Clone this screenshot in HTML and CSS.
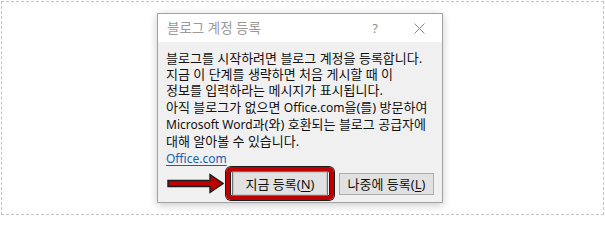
FILE: index.html
```html
<!DOCTYPE html>
<html lang="ko">
<head>
<meta charset="utf-8">
<title>블로그 계정 등록</title>
<link rel="stylesheet" href="styles.css">
</head>
<body>
<div class="frame">
  <div class="dialog">
    <div class="titlebar">
      <span class="title">블로그 계정 등록</span>
      <span class="tb-btn help">?</span>
      <span class="tb-btn close">
        <svg width="11" height="11" viewBox="0 0 11 11"><path d="M0.5 0.5 L10.5 10.5 M10.5 0.5 L0.5 10.5" stroke="#8a8a8a" stroke-width="1" fill="none"/></svg>
      </span>
    </div>
    <div class="body">
      <p class="para">블로그를 시작하려면 블로그 계정을 등록합니다.<br>지금 이 단계를 생략하면 처음 게시할 때 이<br>정보를 입력하라는 메시지가 표시됩니다.</p>
      <p class="para para2">아직 블로그가 없으면 <span class="en">Office.com</span>을(를) 방문하여<br><span class="en">Microsoft Word</span>과(와) 호환되는 블로그 공급자에<br>대해 알아볼 수 있습니다.</p>
      <a class="link en" href="#">Office.com</a>
      <div class="row">
        <svg class="arrow" width="57" height="21" viewBox="0 0 57 21">
          <polygon points="1,7.5 43,7.5 43,1.5 56,10.5 43,19.5 43,13.5 1,13.5" fill="#c00000" stroke="#1c1c1c" stroke-width="1.4" stroke-linejoin="miter"/>
        </svg>
        <div class="highlight">
          <button class="btn btn-default">지금 등록(<u>N</u>)</button>
        </div>
        <button class="btn btn-later">나중에 등록(<u>L</u>)</button>
      </div>
    </div>
  </div>
</div>
</body>
</html>
```
FILE: styles.css
```css
html, body {
  margin: 0;
  padding: 0;
  background: #ffffff;
}
.frame {
  box-sizing: border-box;
  width: 603px;
  height: 214px;
  margin: 1px 0 0 1px;
  border: 1px dashed #c4c4c4;
  overflow: hidden;
}
.dialog {
  box-sizing: border-box;
  width: 286px;
  height: 190px;
  margin: 11px 0 0 155px;
  border: 1px solid #a3a3a3;
  background: #f0f0f0;
  box-shadow: 0 2px 8px rgba(0, 0, 0, 0.22);
  font-family: "Noto Sans", "Noto Sans CJK KR", sans-serif;
  font-size: 13px;
  color: #111;
  display: flex;
  flex-direction: column;
}
.titlebar {
  height: 28px;
  background: #ffffff;
  display: flex;
  align-items: center;
  padding-left: 9px;
  color: #9a9a9a;
}
.title {
  flex: 1;
  font-size: 13.5px;
  line-height: 28px;
}
.tb-btn {
  display: flex;
  align-items: center;
  justify-content: center;
  height: 28px;
}
.help {
  width: 44px;
  font-size: 13px;
  color: #8f8f8f;
}
.close {
  width: 45px;
}
.body {
  flex: 1;
  padding: 8px 0 0 8px;
}
.para {
  margin: 0;
  line-height: 16px;
  white-space: nowrap;
}
.para2 {
  margin-top: 1px;
}
.en {
  font-size: 12px;
}
.link {
  display: inline-block;
  margin-top: 2px;
  line-height: 16px;
  color: #1a5fb4;
  text-decoration: underline;
  text-underline-offset: 2px;
}
.row {
  display: flex;
  align-items: center;
  height: 33px;
}
.arrow {
  margin-left: 1px;
  display: block;
}
.highlight {
  box-sizing: border-box;
  width: 108px;
  height: 33px;
  margin-left: 2px;
  padding: 0 2px;
  border: 4px solid #c00000;
  border-radius: 5px;
  box-shadow: 0 0 0 1px #1c1c1c, inset 0 0 0 1px #1c1c1c;
  display: flex;
  align-items: center;
}
.btn {
  box-sizing: border-box;
  margin: 0;
  padding: 0;
  font-family: "Noto Sans", "Noto Sans CJK KR", sans-serif;
  font-size: 13px;
  color: #111;
  background: #e1e1e1;
  border: 1px solid #adadad;
  border-radius: 0;
  display: flex;
  align-items: center;
  justify-content: center;
}
.btn u {
  text-underline-offset: 2px;
}
.btn-default {
  width: 96px;
  height: 25px;
  border: 1px solid #6f6f6f;
  box-shadow: inset 0 0 0 1px #c8c8c8;
}
.btn-later {
  width: 95px;
  height: 22px;
  margin-left: 5px;
}
```
